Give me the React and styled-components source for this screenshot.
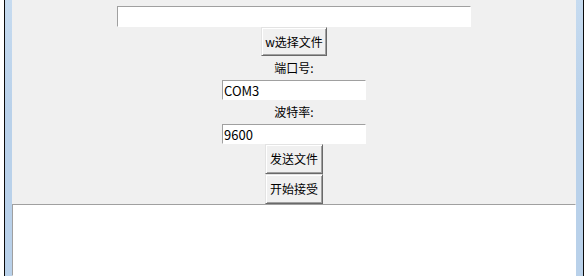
import React from "react";
import styled, { createGlobalStyle } from "styled-components";

const GlobalStyle = createGlobalStyle`
  * {
    box-sizing: border-box;
  }
  html, body {
    margin: 0;
    padding: 0;
    background: #ffffff;
  }
  body {
    font-family: "Noto Sans CJK SC", "Noto Sans", sans-serif;
    font-size: 12px;
    color: #000;
  }
`;

const Page = styled.div`
  display: flex;
  height: 276px;
  padding: 0 4px;
  background: #ffffff;
  overflow: hidden;
`;

const Frame = styled.div`
  flex: 1;
  display: flex;
  border-left: 1px solid #0b0b0b;
  border-right: 1px solid #0b0b0b;
  background: linear-gradient(#c6dbf0, #b9d1ea 40%, #b9d1ea);
  padding: 0 7px;
`;

const Client = styled.div`
  flex: 1;
  display: flex;
  flex-direction: column;
  align-items: center;
  padding-top: 6px;
  background: #f0f0f0;
`;

const Entry = styled.input`
  width: ${(p) => p.w}px;
  height: ${(p) => p.h}px;
  margin: 0;
  padding: 0 1px;
  border-style: solid;
  border-width: 1px;
  border-color: #a0a0a0 #ffffff #ffffff #a0a0a0;
  background: #ffffff;
  font-family: "Noto Sans CJK SC", "Noto Sans", sans-serif;
  font-size: 13px;
  color: #000;
  outline: none;
`;

const Button = styled.button`
  width: ${(p) => p.w}px;
  height: ${(p) => p.h}px;
  margin: 0;
  padding: 0;
  border-style: solid;
  border-width: 1px;
  border-color: #e3e3e3 #696969 #696969 #e3e3e3;
  box-shadow: inset 1px 1px 0 #ffffff, inset -1px -1px 0 #a0a0a0;
  background: #f0f0f0;
  font-family: "Noto Sans CJK SC", "Noto Sans", sans-serif;
  font-size: 12px;
  color: #000;
  line-height: 1;
  cursor: pointer;
`;

const Label = styled.div`
  height: 24px;
  line-height: 24px;
  text-align: center;
`;

const Output = styled.textarea`
  align-self: stretch;
  flex: 1;
  margin: 0;
  padding: 2px;
  resize: none;
  border-style: solid;
  border-width: 1px;
  border-color: #a0a0a0 #ffffff #ffffff #a0a0a0;
  background: #ffffff;
  font-family: "Noto Sans CJK SC", "Noto Sans", sans-serif;
  font-size: 12px;
  outline: none;
`;

export default function App() {
  return (
    <>
      <GlobalStyle />
      <Page>
        <Frame>
          <Client>
            <Entry w={354} h={21} defaultValue="" />
            <Button w={66} h={29}>w选择文件</Button>
            <Label>端口号:</Label>
            <Entry w={144} h={20} defaultValue="COM3" />
            <Label>波特率:</Label>
            <Entry w={144} h={20} defaultValue="9600" />
            <Button w={58} h={30}>发送文件</Button>
            <Button w={58} h={30}>开始接受</Button>
            <Output defaultValue="" />
          </Client>
        </Frame>
      </Page>
    </>
  );
}
